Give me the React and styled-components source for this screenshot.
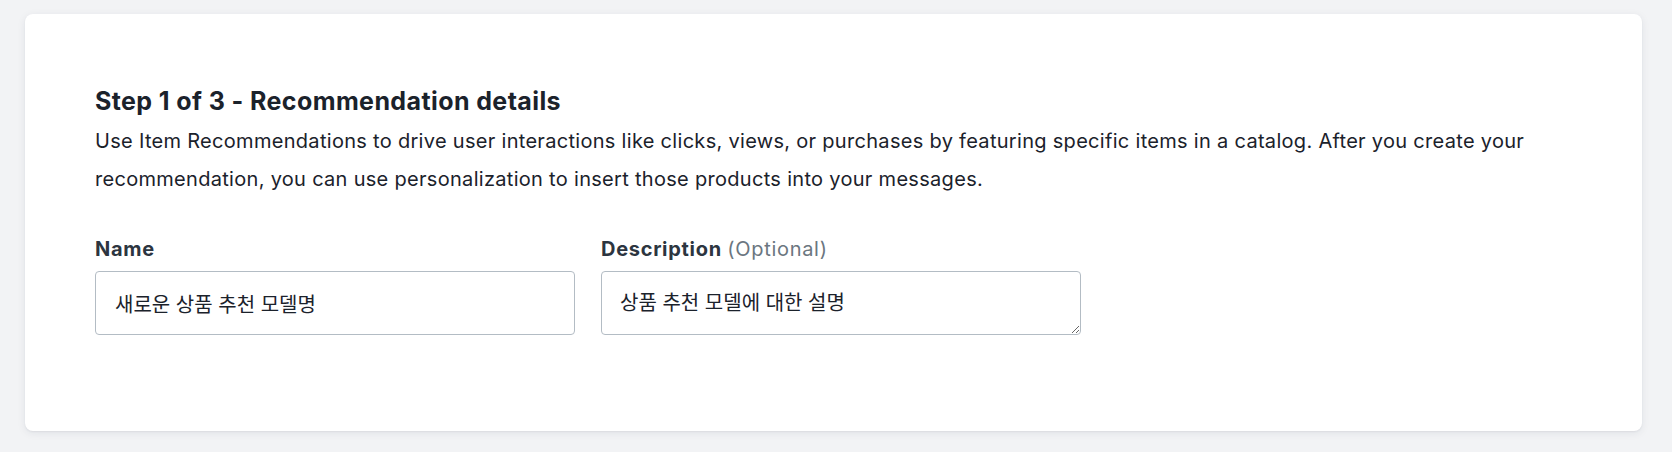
import styled, { createGlobalStyle } from "styled-components";

const GlobalStyle = createGlobalStyle`
    html, body {
        margin: 0;
        background: #f2f3f5;
        font-family: Inter, "Noto Sans CJK KR", sans-serif;
    }
`;

export default function App() {
    return (
        <>
            <GlobalStyle />
            <Page>
                <Card>
                    <Title>Step 1 of 3 - Recommendation details</Title>
                    <Intro>
                        Use Item Recommendations to drive user interactions like clicks, views, or purchases by
                        featuring specific items in a catalog. After you create your recommendation, you can use
                        personalization to insert those products into your messages.
                    </Intro>
                    <Fields>
                        <Field>
                            <Label>Name</Label>
                            <TextInput defaultValue="새로운 상품 추천 모델명" />
                        </Field>
                        <Field>
                            <Label>
                                Description <Hint>(Optional)</Hint>
                            </Label>
                            <TextArea defaultValue="상품 추천 모델에 대한 설명" />
                        </Field>
                    </Fields>
                </Card>
            </Page>
        </>
    );
}

const Page = styled.div`
    padding: 14px 30px 21px 25px;
`;

const Card = styled.section`
    background: #fff;
    border-radius: 8px;
    box-shadow: 0 2px 8px rgba(30, 40, 60, 0.08), 0 1px 2px rgba(30, 40, 60, 0.06);
    padding: 72px 72px 96px 70px;
    height: 417px;
    box-sizing: border-box;
`;

const Title = styled.h2`
    margin: 0 0 6px;
    font-size: 25px;
    line-height: 30px;
    font-weight: 700;
    letter-spacing: 0.4px;
    color: #1b222b;
`;

const Intro = styled.p`
    margin: 0;
    font-size: 20px;
    line-height: 38px;
    letter-spacing: 0.3px;
    color: #1b222b;
`;

const Fields = styled.div`
    display: flex;
    gap: 26px;
    margin-top: 39px;
`;

const Field = styled.div`
    display: flex;
    flex-direction: column;
    gap: 10px;
    width: 480px;
`;

const Label = styled.label`
    font-size: 20px;
    line-height: 24px;
    font-weight: 700;
    letter-spacing: 0.7px;
    color: #2c3540;
`;

const Hint = styled.span`
    font-weight: 400;
    color: #6b7680;
`;

const inputBase = `
    box-sizing: border-box;
    width: 100%;
    height: 64px;
    border: 1px solid #b3bcc4;
    border-radius: 4px;
    padding: 19px;
    font-family: Inter, "Noto Sans CJK KR", sans-serif;
    font-size: 20px;
    line-height: 24px;
    color: #1b222b;
    background: #fff;
    outline: none;
`;

const TextInput = styled.input`
    ${inputBase}
`;

const TextArea = styled.textarea`
    ${inputBase}
    display: block;
    resize: vertical;
    overflow: hidden;
    padding-left: 18px;
`;
